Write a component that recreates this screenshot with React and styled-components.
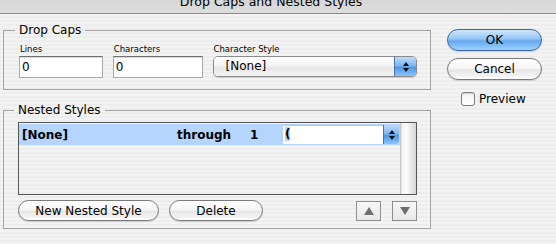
import React from "react";
import styled, { createGlobalStyle } from "styled-components";

const GlobalStyle = createGlobalStyle`
  body {
    margin: 0;
    font-family: "DejaVu Sans", "Liberation Sans", sans-serif;
    color: #000;
  }
`;

const Window = styled.div`
  width: 556px;
  height: 244px;
  overflow: hidden;
  background: repeating-linear-gradient(
    to bottom,
    #ededed 0px,
    #ededed 2px,
    #f3f3f3 2px,
    #f3f3f3 4px
  );
`;

const TitleBar = styled.div`
  height: 13px;
  overflow: hidden;
  border-bottom: 1px solid #8a8a8a;
  background: linear-gradient(#d6d6d6, #dedede);
  padding-right: 14px;
  text-align: center;
`;

const TitleText = styled.div`
  margin-top: -5px;
  font-size: 12.5px;
  line-height: 14px;
`;

const Body = styled.div`
  display: flex;
  align-items: flex-start;
`;

const LeftColumn = styled.div`
  width: 428px;
  margin: 8px 0 0 3px;
  display: flex;
  flex-direction: column;
  gap: 12px;
`;

const Group = styled.fieldset`
  margin: 0;
  min-width: 0;
  border: 1px solid #a4a4a4;
  padding: ${(p) => p.$pad};
`;

const Legend = styled.legend`
  font-size: 12px;
  line-height: 16px;
  padding: 0 4px;
  margin-left: -4px;
`;

const FieldRow = styled.div`
  display: flex;
  gap: 10px;
`;

const Field = styled.div`
  display: flex;
  flex-direction: column;
  width: ${(p) => p.$w}px;
`;

const Label = styled.div`
  font-size: 8.5px;
  line-height: 12px;
  margin-bottom: 1px;
  padding-left: 1px;
`;

const TextBox = styled.div`
  height: 22px;
  box-sizing: border-box;
  background: #fff;
  border: 1px solid #a9a9a9;
  border-top-color: #6f6f6f;
  box-shadow: inset 0 1px 0 #d8d8d8;
  font-size: 12px;
  line-height: 20px;
  padding-left: 2px;
`;

const PopUp = styled.div`
  height: 21px;
  box-sizing: border-box;
  display: flex;
  border: 1px solid #8a8a8a;
  border-radius: 5px;
  overflow: hidden;
  box-shadow: 0 1px 1px rgba(0, 0, 0, 0.15);
`;

const PopUpValue = styled.div`
  flex: 1;
  font-size: 12px;
  line-height: 19px;
  padding-left: 12px;
  background: linear-gradient(#ffffff 0%, #f4f4f4 45%, #e6e6e6 55%, #f2f2f2 100%);
`;

const ArrowCap = styled.div`
  width: ${(p) => p.$w}px;
  display: flex;
  flex-direction: column;
  align-items: center;
  justify-content: center;
  gap: 2px;
  border-left: 1px solid #4c72b0;
  background: linear-gradient(#bcdcfb 0%, #7fb7f0 45%, #4d97e8 55%, #8cc6fb 100%);
  border-radius: ${(p) => p.$r || "0"};
`;

const Tri = styled.div`
  width: 0;
  height: 0;
  border-left: 3px solid transparent;
  border-right: 3px solid transparent;
  ${(p) =>
    p.$up
      ? "border-bottom: 4px solid #111;"
      : "border-top: 4px solid #111;"}
`;

const ListBox = styled.div`
  height: 73px;
  box-sizing: border-box;
  border: 1px solid #555;
  display: flex;
`;

const ListRows = styled.div`
  flex: 1;
  padding-top: 1px;
`;

const Row = styled.div`
  height: 21px;
  display: grid;
  grid-template-columns: 155px 73px 33px 116px;
  align-items: center;
  padding-left: 3px;
  background: #b5d5fe;
  font-size: 12px;
  font-weight: bold;
`;

const Combo = styled.div`
  height: 19px;
  display: flex;
`;

const ComboInput = styled.div`
  flex: 1;
  background: #fff;
  border-top: 1px solid #c4c4c4;
  font-weight: bold;
  font-size: 12px;
  line-height: 17px;
  padding-left: 2px;
`;

const Selected = styled.span`
  background: #b5d5fe;
`;

const Scroll = styled.div`
  width: 16px;
  background: linear-gradient(to right, #b8b8b8 0px, #f4f4f4 2px, #fbfbfb 40%, #d4d4d4 100%);
`;

const ButtonRow = styled.div`
  display: flex;
  align-items: center;
  gap: 10px;
  margin-top: 5px;
`;

const PillButton = styled.button`
  width: ${(p) => p.$w}px;
  height: ${(p) => p.$h || 21}px;
  padding: 0;
  margin: 0;
  border-radius: 11px;
  font-family: inherit;
  font-size: 12px;
  color: #000;
  border: 1px solid ${(p) => (p.$primary ? "#3f68a8" : "#7a7a7a")};
  background: ${(p) =>
    p.$primary
      ? "linear-gradient(#cfe6fc 0%, #93c6f6 45%, #63a8ee 55%, #9ed2fd 100%)"
      : "linear-gradient(#ffffff 0%, #f6f6f6 45%, #e6e6e6 55%, #f3f3f3 85%, #ffffff 100%)"};
  box-shadow: 0 1px 1px rgba(0, 0, 0, 0.15);
`;

const Spacer = styled.div`
  flex: 1;
`;

const SquareButton = styled.div`
  width: 25px;
  height: 20px;
  box-sizing: border-box;
  border: 1px solid #8e8e8e;
  background: linear-gradient(#f7f7f7, #e8e8e8);
  display: flex;
  align-items: center;
  justify-content: center;
  margin-left: ${(p) => p.$ml || 0}px;
`;

const BigTri = styled.div`
  width: 0;
  height: 0;
  border-left: 5px solid transparent;
  border-right: 5px solid transparent;
  ${(p) =>
    p.$up
      ? "border-bottom: 8px solid #6e6e6e;"
      : "border-top: 8px solid #6e6e6e;"}
`;

const RightColumn = styled.div`
  width: 95px;
  margin: 15px 0 0 16px;
  display: flex;
  flex-direction: column;
  gap: 7px;
`;

const CheckRow = styled.label`
  display: flex;
  align-items: center;
  gap: 4px;
  margin: 5px 0 0 14px;
  font-size: 12px;
`;

const CheckBox = styled.span`
  width: 14px;
  height: 14px;
  box-sizing: border-box;
  border: 1px solid #7d7d7d;
  border-radius: 3px;
  background: linear-gradient(#f2f2f2, #ffffff);
  box-shadow: inset 0 1px 1px rgba(0, 0, 0, 0.15);
`;

export default function App() {
  return (
    <Window>
      <GlobalStyle />
      <TitleBar>
        <TitleText>Drop Caps and Nested Styles</TitleText>
      </TitleBar>
      <Body>
        <LeftColumn>
          <Group $pad="5px 13px 11px 15px">
            <Legend>Drop Caps</Legend>
            <FieldRow>
              <Field $w={84}>
                <Label>Lines</Label>
                <TextBox>0</TextBox>
              </Field>
              <Field $w={90}>
                <Label>Characters</Label>
                <TextBox>0</TextBox>
              </Field>
              <Field $w={205}>
                <Label>Character Style</Label>
                <PopUp>
                  <PopUpValue>[None]</PopUpValue>
                  <ArrowCap $w={21}>
                    <Tri $up />
                    <Tri />
                  </ArrowCap>
                </PopUp>
              </Field>
            </FieldRow>
          </Group>

          <Group $pad="4px 13px 7px 14px">
            <Legend>Nested Styles</Legend>
            <ListBox>
              <ListRows>
                <Row>
                  <span>[None]</span>
                  <span>through</span>
                  <span>1</span>
                  <Combo>
                    <ComboInput>
                      <Selected>(</Selected>
                    </ComboInput>
                    <ArrowCap $w={15} $r="0 4px 4px 0">
                      <Tri $up />
                      <Tri />
                    </ArrowCap>
                  </Combo>
                </Row>
              </ListRows>
              <Scroll />
            </ListBox>
            <ButtonRow>
              <PillButton $w={141}>New Nested Style</PillButton>
              <PillButton $w={94}>Delete</PillButton>
              <Spacer />
              <SquareButton>
                <BigTri $up />
              </SquareButton>
              <SquareButton $ml={1}>
                <BigTri />
              </SquareButton>
            </ButtonRow>
          </Group>
        </LeftColumn>

        <RightColumn>
          <PillButton $w={95} $h={22} $primary>
            OK
          </PillButton>
          <PillButton $w={95} $h={22}>
            Cancel
          </PillButton>
          <CheckRow>
            <CheckBox />
            Preview
          </CheckRow>
        </RightColumn>
      </Body>
    </Window>
  );
}
